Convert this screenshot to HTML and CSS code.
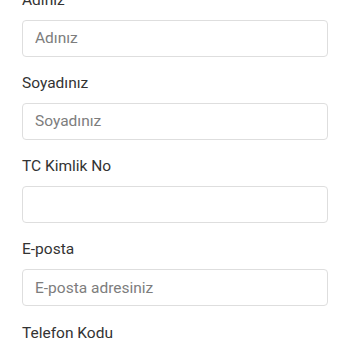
FILE: index.html
```html
<!DOCTYPE html>
<html lang="tr">
<head>
    <meta charset="UTF-8">
    <meta name="viewport" content="width=device-width, initial-scale=1.0">
    <title>Kayıt Formu</title>
    <link rel="stylesheet" href="styles.css">
</head>
<body>
<form class="register-form">
    <div class="form-group">
        <label for="ad">Adınız</label>
        <input type="text" id="ad" placeholder="Adınız">
    </div>
    <div class="form-group">
        <label for="soyad">Soyadınız</label>
        <input type="text" id="soyad" placeholder="Soyadınız">
    </div>
    <div class="form-group">
        <label for="tc">TC Kimlik No</label>
        <input type="text" id="tc">
    </div>
    <div class="form-group">
        <label for="eposta">E-posta</label>
        <input type="email" id="eposta" placeholder="E-posta adresiniz">
    </div>
    <div class="form-group">
        <label for="tel-kod">Telefon Kodu</label>
        <input type="text" id="tel-kod">
    </div>
</form>
</body>
</html>
```

FILE: styles.css
```css
body {
    font-family: Roboto, "Noto Sans", Arial, sans-serif;
    background-color: #fff;
    margin: 0;
    overflow: hidden;
}

.register-form {
    padding: 0 22px;
    margin-top: -12.5px;
}

.form-group {
    margin-bottom: 14.3px;
}

.form-group label {
    display: block;
    font-size: 15.5px;
    line-height: 24px;
    color: #333;
    margin-bottom: 8px;
}

.form-group input {
    display: block;
    box-sizing: border-box;
    width: 100%;
    height: 37px;
    padding: 0 12px;
    border: 1px solid #dedede;
    border-radius: 4px;
    font-family: inherit;
    font-size: 15.5px;
    color: #333;
    background: #fff;
    outline: none;
}

.form-group input::placeholder {
    color: #7d7d7d;
}
```
